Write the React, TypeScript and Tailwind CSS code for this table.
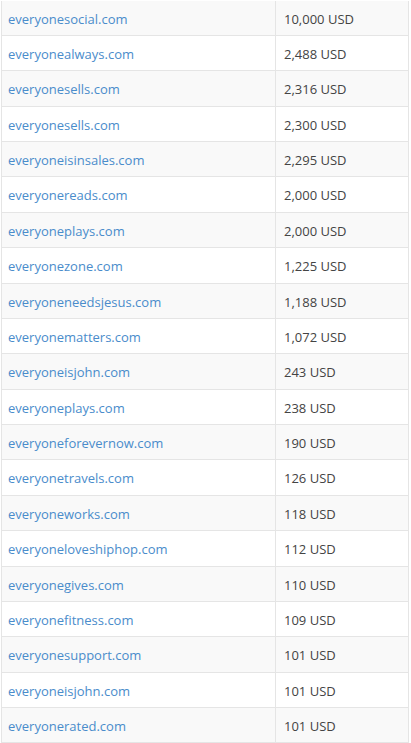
import React from "react";

const rows: [string, string][] = [
  ["everyonesocial.com", "10,000 USD"],
  ["everyonealways.com", "2,488 USD"],
  ["everyonesells.com", "2,316 USD"],
  ["everyonesells.com", "2,300 USD"],
  ["everyoneisinsales.com", "2,295 USD"],
  ["everyonereads.com", "2,000 USD"],
  ["everyoneplays.com", "2,000 USD"],
  ["everyonezone.com", "1,225 USD"],
  ["everyoneneedsjesus.com", "1,188 USD"],
  ["everyonematters.com", "1,072 USD"],
  ["everyoneisjohn.com", "243 USD"],
  ["everyoneplays.com", "238 USD"],
  ["everyoneforevernow.com", "190 USD"],
  ["everyonetravels.com", "126 USD"],
  ["everyoneworks.com", "118 USD"],
  ["everyoneloveshiphop.com", "112 USD"],
  ["everyonegives.com", "110 USD"],
  ["everyonefitness.com", "109 USD"],
  ["everyonesupport.com", "101 USD"],
  ["everyoneisjohn.com", "101 USD"],
  ["everyonerated.com", "101 USD"],
];

export default function App() {
  return (
    <div className="w-[411px] h-[743px] overflow-hidden bg-white" style={{ fontFamily: '"Open Sans", sans-serif' }}>
      <div className="ml-px mt-[0.6px] w-[408px] border-l border-r border-[#e5e5e5]">
        {rows.map(([d, p], i) => (
          <div
            key={i}
            className={`flex h-[35.38px] items-center border-b border-[#e5e5e5] text-[13px] ${i % 2 === 0 ? "bg-[#f9f9f9]" : "bg-white"}`}
          >
            <div className="w-[274px] h-full flex items-center pl-[6px] pt-[3px] border-r border-[#e5e5e5] text-[#4a8ccb]">
              {d}
            </div>
            <div className="flex-1 pl-[8px] pt-[3px] text-[#444]">{p}</div>
          </div>
        ))}
      </div>
    </div>
  );
}
